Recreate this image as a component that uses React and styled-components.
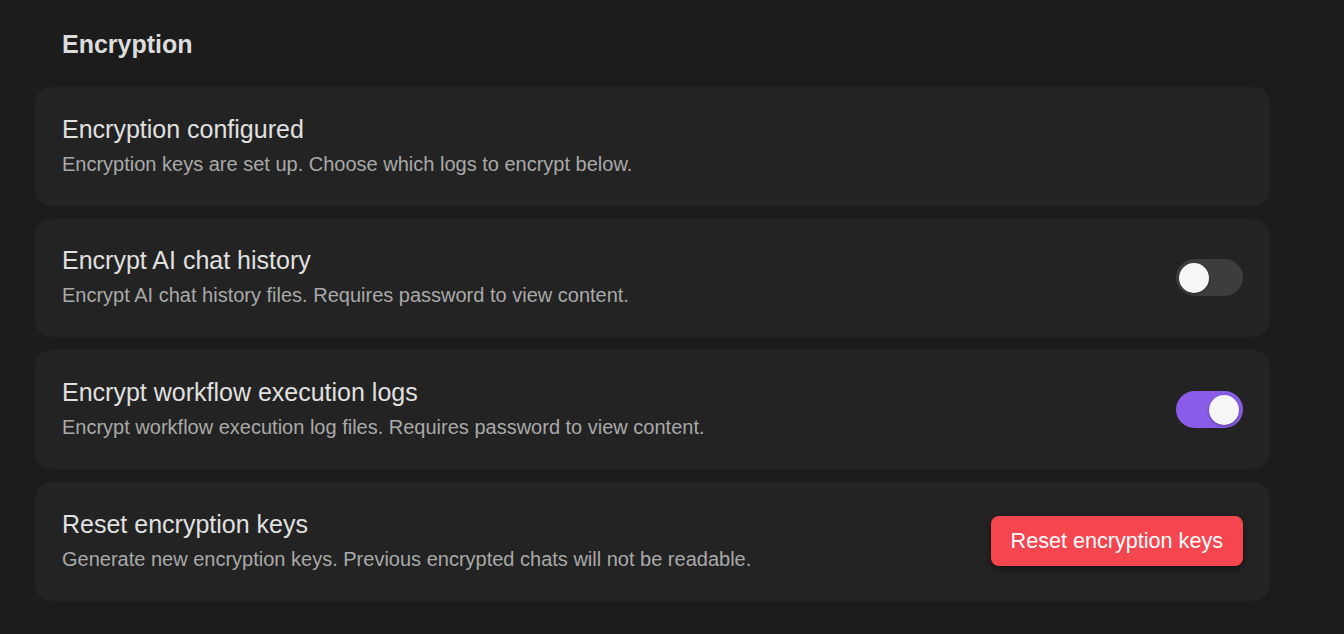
import styled, { createGlobalStyle } from "styled-components";
import { useState } from "react";

const Global = createGlobalStyle`
  html, body {
    margin: 0;
    padding: 0;
    background: #1c1c1c;
    font-family: "Liberation Sans", Arial, sans-serif;
  }
`;

export default function App() {
  const [chat, setChat] = useState(false);
  const [workflow, setWorkflow] = useState(true);

  return (
    <Page>
      <Global />
      <Heading>Encryption</Heading>
      <List>
        <Card>
          <Text>
            <Title>Encryption configured</Title>
            <Desc>Encryption keys are set up. Choose which logs to encrypt below.</Desc>
          </Text>
        </Card>
        <Card>
          <Text>
            <Title>Encrypt AI chat history</Title>
            <Desc>Encrypt AI chat history files. Requires password to view content.</Desc>
          </Text>
          <Toggle $on={chat} onClick={() => setChat(!chat)}>
            <Knob $on={chat} />
          </Toggle>
        </Card>
        <Card>
          <Text>
            <Title>Encrypt workflow execution logs</Title>
            <Desc>Encrypt workflow execution log files. Requires password to view content.</Desc>
          </Text>
          <Toggle $on={workflow} onClick={() => setWorkflow(!workflow)}>
            <Knob $on={workflow} />
          </Toggle>
        </Card>
        <Card>
          <Text>
            <Title>Reset encryption keys</Title>
            <Desc>Generate new encryption keys. Previous encrypted chats will not be readable.</Desc>
          </Text>
          <DangerButton>Reset encryption keys</DangerButton>
        </Card>
      </List>
    </Page>
  );
}

const Page = styled.div`
  min-height: 634px;
  box-sizing: border-box;
  padding: 29px 74px 0 35px;
  background: #1c1c1c;
`;

const Heading = styled.h2`
  margin: 0 0 28px;
  padding-left: 27px;
  font-size: 25px;
  line-height: 30px;
  font-weight: 700;
  color: #dcdcdc;
`;

const List = styled.div`
  display: flex;
  flex-direction: column;
  gap: 13px;
`;

const Card = styled.div`
  display: flex;
  align-items: center;
  justify-content: space-between;
  box-sizing: border-box;
  height: 118.67px;
  padding: 0 27px;
  border-radius: 16px;
  background: #232323;
`;

const Text = styled.div`
  display: flex;
  flex-direction: column;
  gap: 7px;
  padding-bottom: 2px;
`;

const Title = styled.div`
  font-size: 25px;
  line-height: 30px;
  color: #e0e0e0;
`;

const Desc = styled.div`
  font-size: 20px;
  line-height: 26px;
  color: #a9a9a9;
`;

const Toggle = styled.button`
  position: relative;
  width: 67px;
  height: 37px;
  padding: 0;
  border: none;
  border-radius: 19px;
  background: ${(p) => (p.$on ? "#8a5ce8" : "#3d3d3d")};
  cursor: pointer;
  flex-shrink: 0;
`;

const Knob = styled.span`
  position: absolute;
  top: 3.5px;
  left: ${(p) => (p.$on ? "33px" : "3px")};
  width: 30px;
  height: 30px;
  border-radius: 50%;
  background: #f6f6f6;
  box-shadow: 0 1px 3px rgba(0, 0, 0, 0.35);
`;

const DangerButton = styled.button`
  height: 50px;
  padding: 0 20px;
  border: none;
  border-radius: 8px;
  background: #f5454f;
  color: #fff;
  font-family: "Liberation Sans", Arial, sans-serif;
  font-size: 21.6px;
  box-shadow: 0 3px 6px rgba(0, 0, 0, 0.45);
  cursor: pointer;
  flex-shrink: 0;
`;
